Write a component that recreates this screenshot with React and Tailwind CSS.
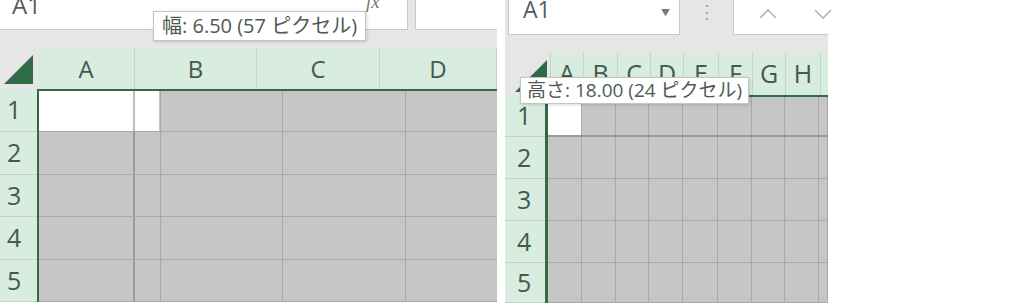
import React from "react";

const uiFont = "font-['Open_Sans','Noto_Sans_CJK_JP',sans-serif]";

// header widths (px) and cell column widths for the left sheet
const leftHeads = [
  { label: "A", w: "w-[97px]" },
  { label: "B", w: "w-[122px]" },
  { label: "C", w: "w-[123px]" },
  { label: "D", w: "w-[117px]" },
];
const leftRows = ["h-[41px]", "h-[43px]", "h-[42px]", "h-[43px]", "h-[42px]"];
const leftRowHeads = ["h-[43px]", "h-[43px]", "h-[42px]", "h-[43px]", "h-[42px]"];

const rightHeads = [
  { label: "A", w: "w-[33px]" },
  { label: "B", w: "w-[34px]" },
  { label: "C", w: "w-[33px]" },
  { label: "D", w: "w-[33px]" },
  { label: "E", w: "w-[35px]" },
  { label: "F", w: "w-[34px]" },
  { label: "G", w: "w-[33px]" },
  { label: "H", w: "w-[35px]" },
  { label: "", w: "w-[8px]" },
];
const rightCols = ["w-[34px]", "w-[34px]", "w-[33px]", "w-[34px]", "w-[35px]", "w-[34px]", "w-[33px]", "w-[34px]", "w-[9px]"];
const rightRows = ["h-[40px]", "h-[42px]", "h-[42px]", "h-[42px]", "h-[40px]"];
const rightRowHeads = ["h-[42px]", "h-[42px]", "h-[42px]", "h-[42px]", "h-[40px]"];

const Corner = ({ size }) => (
  <svg width={size} height={size} viewBox="0 0 10 10">
    <polygon points="10,0 10,10 0,10" fill="#2f6b45" />
  </svg>
);

const LeftSheet = () => (
  <div className="flex h-[302px] w-[497px] flex-col bg-[#e6e6e6]">
    {/* name box + formula bar */}
    <div className="flex h-[30px]">
      <div className="relative w-[408px] overflow-hidden border-r border-b border-[#c8c8c8] bg-white">
        <span className="absolute left-[12px] top-[-13px] text-[24px] text-[#5a5a5a]">A1</span>
        <span className="absolute left-[366px] top-[-12px] font-['Liberation_Serif',serif] text-[19px] italic text-[#777]">fx</span>
      </div>
      <div className="w-[7px]" />
      <div className="flex-1 border-l border-b border-[#c8c8c8] bg-white" />
    </div>
    <div className="h-[18px]" />
    {/* column headers */}
    <div className="flex h-[41px]">
      <div className="flex w-[38px] items-end justify-end pb-[5px] pr-[5px]">
        <Corner size={29} />
      </div>
      {leftHeads.map((h) => (
        <div
          key={h.label}
          className={`${h.w} flex items-center justify-center border-r border-[#c3d3c8] bg-[#d8ece0] text-[24px] text-[#435a4d]`}
        >
          {h.label}
        </div>
      ))}
    </div>
    {/* body */}
    <div className="flex">
      <div className="flex w-[37px] flex-col bg-[#d8ece0]">
        {leftRowHeads.map((h, i) => (
          <div
            key={i}
            className={`${h} flex items-center border-b border-[#c3d3c8] pl-[7px] text-[25px] text-[#435a4d]`}
          >
            {i + 1}
          </div>
        ))}
      </div>
      <div className="flex flex-1 flex-col border-l-2 border-t-2 border-[#2f6b45] bg-[#c6c6c6]">
        {leftRows.map((h, i) => (
          <div key={i} className={`${h} flex border-b border-[#a9a9a9]`}>
            <div className={`w-[96px] border-r-2 ${i === 0 ? "border-[#bdbdbd] bg-white" : "border-[#9a9a9a]"}`} />
            <div className={`w-[24px] ${i === 0 ? "bg-white" : ""}`} />
            <div className="w-[2px] border-r border-[#a9a9a9]" />
            <div className="w-[122px] border-r border-[#a9a9a9]" />
            <div className="w-[123px] border-r border-[#a9a9a9]" />
            <div className="flex-1" />
          </div>
        ))}
      </div>
    </div>
  </div>
);

const RightSheet = () => (
  <div className="flex h-[303px] w-[323px] flex-col bg-[#e6e6e6]">
    {/* name box + buttons */}
    <div className="flex h-[35px]">
      <div className="w-[3px]" />
      <div className="relative w-[172px] overflow-hidden border border-t-0 border-[#c8c8c8] bg-white">
        <span className="absolute left-[14px] top-[-8px] text-[23px] text-[#5a5a5a]">A1</span>
        <span className="absolute left-[152px] top-[6px] text-[9px] text-[#777]">▼</span>
      </div>
      <div className="flex w-[53px] items-start justify-center pt-[2px] text-[18px] leading-none text-[#a0a0a0]">⋮</div>
      <div className="relative flex-1 border-l border-b border-[#c8c8c8] bg-white">
        <svg className="absolute left-[24px] top-[8px]" width="20" height="12" viewBox="0 0 20 12">
          <polyline points="2,10 10,2 18,10" fill="none" stroke="#b5b5b5" strokeWidth="1.6" />
        </svg>
        <svg className="absolute left-[79px] top-[8px]" width="20" height="12" viewBox="0 0 20 12">
          <polyline points="2,2 10,10 18,2" fill="none" stroke="#b5b5b5" strokeWidth="1.6" />
        </svg>
      </div>
    </div>
    <div className="h-[18px]" />
    {/* column headers */}
    <div className="flex h-[42px]">
      <div className="flex w-[45px] items-end justify-end pb-[3px] pr-[3px]">
        <Corner size={32} />
      </div>
      {rightHeads.map((h, i) => (
        <div
          key={i}
          className={`${h.w} flex items-center justify-center border-l border-[#c3d3c8] bg-[#d8ece0] text-[25px] text-[#435a4d]`}
        >
          {h.label}
        </div>
      ))}
    </div>
    {/* body */}
    <div className="flex">
      <div className="flex w-[40px] flex-col bg-[#d8ece0]">
        {rightRowHeads.map((h, i) => (
          <div
            key={i}
            className={`${h} flex items-center border-b border-[#c3d3c8] pl-[12px] text-[25px] text-[#435a4d]`}
          >
            {i + 1}
          </div>
        ))}
      </div>
      <div className="flex flex-1 flex-col border-l-[3px] border-t-2 border-[#2f6b45] bg-[#c6c6c6]">
        {rightRows.map((h, i) => (
          <div
            key={i}
            className={`${h} flex ${i === 0 ? "border-b-2 border-[#9a9a9a]" : "border-b border-[#a9a9a9]"}`}
          >
            {rightCols.map((w, j) => (
              <div
                key={j}
                className={`${w} border-r border-[#a9a9a9] ${i === 0 && j === 0 ? "bg-white" : ""}`}
              />
            ))}
          </div>
        ))}
      </div>
    </div>
  </div>
);

const Tip = ({ className, children }) => (
  <div
    className={`absolute flex items-center whitespace-nowrap border border-[#c4c4c4] bg-white leading-none text-[#4e5a52] shadow-[1px_1px_3px_rgba(0,0,0,0.15)] ${className}`}
  >
    {children}
  </div>
);

export default function App() {
  return (
    <div className={`relative flex h-[305px] w-[1024px] overflow-hidden bg-white ${uiFont}`}>
      <LeftSheet />
      <div className="w-[8px]" />
      <RightSheet />
      <Tip className="left-[153px] top-[11px] h-[30px] px-[8px] text-[20px]">幅: 6.50 (57 ピクセル)</Tip>
      <Tip className="left-[520px] top-[77px] h-[27px] px-[6px] text-[19px]">高さ: 18.00 (24 ピクセル)</Tip>
    </div>
  );
}
